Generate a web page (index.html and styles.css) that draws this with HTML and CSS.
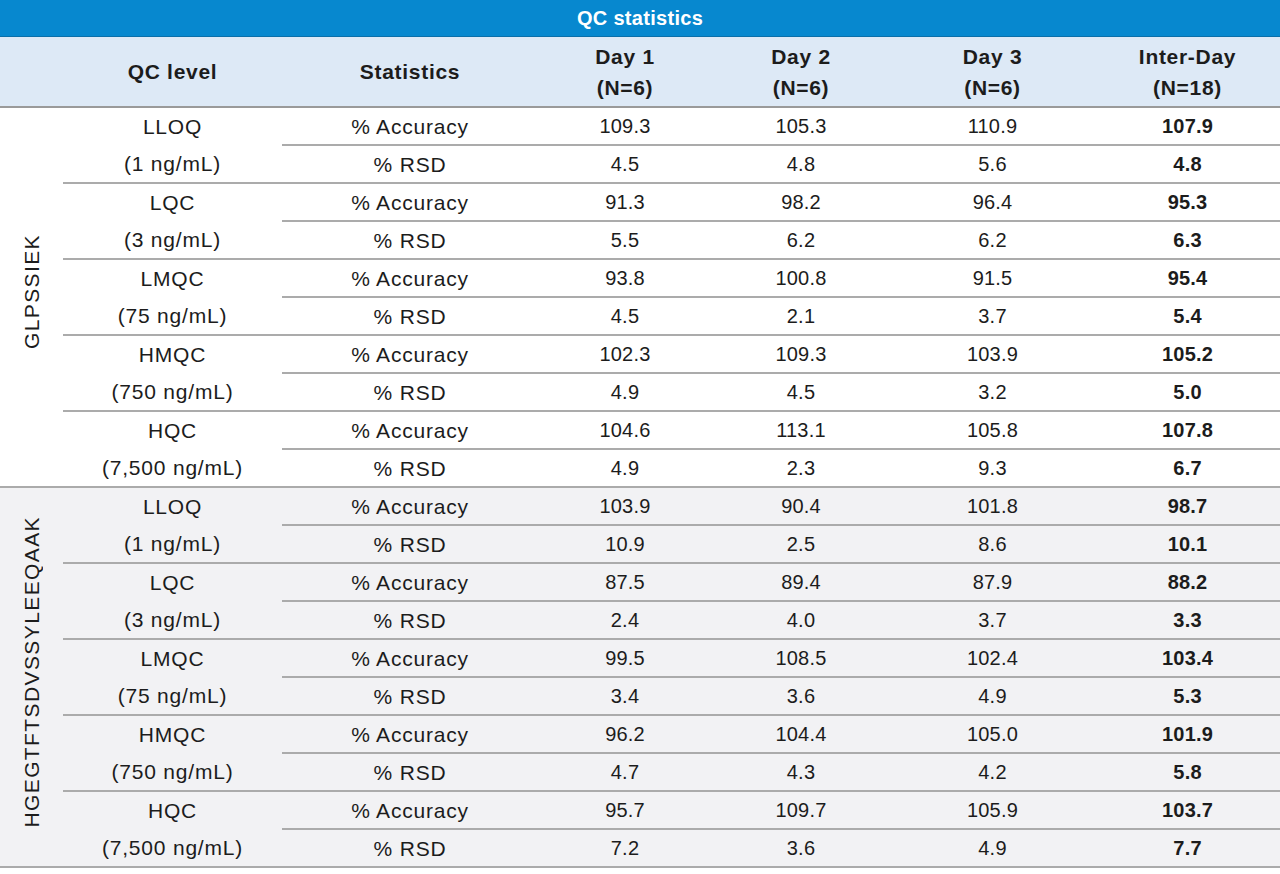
FILE: index.html
```html
<!DOCTYPE html>
<html lang="en">
<head>
<meta charset="utf-8">
<title>QC statistics</title>
<link rel="stylesheet" href="styles.css">
</head>
<body>
<table class="qc">
  <colgroup>
    <col class="c-pep"><col class="c-level"><col class="c-stat"><col class="c-d1"><col class="c-d2"><col class="c-d3"><col class="c-inter">
  </colgroup>
  <thead>
    <tr class="title-row"><th colspan="7">QC statistics</th></tr>
    <tr class="head-row">
      <th></th>
      <th>QC level</th>
      <th>Statistics</th>
      <th>Day 1<br>(N=6)</th>
      <th>Day 2<br>(N=6)</th>
      <th>Day 3<br>(N=6)</th>
      <th>Inter-Day<br>(N=18)</th>
    </tr>
  </thead>
  <tbody class="grp">
    <tr><td class="pep" rowspan="10"><span>GLPSSIEK</span></td><td class="lvl" rowspan="2">LLOQ<br>(1 ng/mL)</td><td class="s">% Accuracy</td><td>109.3</td><td>105.3</td><td>110.9</td><td class="b">107.9</td></tr>
    <tr><td class="s">% RSD</td><td>4.5</td><td>4.8</td><td>5.6</td><td class="b">4.8</td></tr>
    <tr><td class="lvl" rowspan="2">LQC<br>(3 ng/mL)</td><td class="s">% Accuracy</td><td>91.3</td><td>98.2</td><td>96.4</td><td class="b">95.3</td></tr>
    <tr><td class="s">% RSD</td><td>5.5</td><td>6.2</td><td>6.2</td><td class="b">6.3</td></tr>
    <tr><td class="lvl" rowspan="2">LMQC<br>(75 ng/mL)</td><td class="s">% Accuracy</td><td>93.8</td><td>100.8</td><td>91.5</td><td class="b">95.4</td></tr>
    <tr><td class="s">% RSD</td><td>4.5</td><td>2.1</td><td>3.7</td><td class="b">5.4</td></tr>
    <tr><td class="lvl" rowspan="2">HMQC<br>(750 ng/mL)</td><td class="s">% Accuracy</td><td>102.3</td><td>109.3</td><td>103.9</td><td class="b">105.2</td></tr>
    <tr><td class="s">% RSD</td><td>4.9</td><td>4.5</td><td>3.2</td><td class="b">5.0</td></tr>
    <tr><td class="lvl" rowspan="2">HQC<br>(7,500 ng/mL)</td><td class="s">% Accuracy</td><td>104.6</td><td>113.1</td><td>105.8</td><td class="b">107.8</td></tr>
    <tr><td class="s">% RSD</td><td>4.9</td><td>2.3</td><td>9.3</td><td class="b">6.7</td></tr>
  </tbody>
  <tbody class="grp alt">
    <tr><td class="pep" rowspan="10"><span>HGEGTFTSDVSSYLEEQAAK</span></td><td class="lvl" rowspan="2">LLOQ<br>(1 ng/mL)</td><td class="s">% Accuracy</td><td>103.9</td><td>90.4</td><td>101.8</td><td class="b">98.7</td></tr>
    <tr><td class="s">% RSD</td><td>10.9</td><td>2.5</td><td>8.6</td><td class="b">10.1</td></tr>
    <tr><td class="lvl" rowspan="2">LQC<br>(3 ng/mL)</td><td class="s">% Accuracy</td><td>87.5</td><td>89.4</td><td>87.9</td><td class="b">88.2</td></tr>
    <tr><td class="s">% RSD</td><td>2.4</td><td>4.0</td><td>3.7</td><td class="b">3.3</td></tr>
    <tr><td class="lvl" rowspan="2">LMQC<br>(75 ng/mL)</td><td class="s">% Accuracy</td><td>99.5</td><td>108.5</td><td>102.4</td><td class="b">103.4</td></tr>
    <tr><td class="s">% RSD</td><td>3.4</td><td>3.6</td><td>4.9</td><td class="b">5.3</td></tr>
    <tr><td class="lvl" rowspan="2">HMQC<br>(750 ng/mL)</td><td class="s">% Accuracy</td><td>96.2</td><td>104.4</td><td>105.0</td><td class="b">101.9</td></tr>
    <tr><td class="s">% RSD</td><td>4.7</td><td>4.3</td><td>4.2</td><td class="b">5.8</td></tr>
    <tr><td class="lvl" rowspan="2">HQC<br>(7,500 ng/mL)</td><td class="s">% Accuracy</td><td>95.7</td><td>109.7</td><td>105.9</td><td class="b">103.7</td></tr>
    <tr><td class="s">% RSD</td><td>7.2</td><td>3.6</td><td>4.9</td><td class="b">7.7</td></tr>
  </tbody>
</table>
</body>
</html>
```

FILE: styles.css
```css
html, body {
  margin: 0;
  padding: 0;
  background: #ffffff;
}

body {
  font-family: "Liberation Sans", Arial, sans-serif;
  color: #1c1c1c;
}

.qc {
  width: 1280px;
  border-collapse: collapse;
  table-layout: fixed;
  font-size: 20px;
  letter-spacing: 0.2px;
}

.c-pep { width: 63px; }
.c-level { width: 219px; }
.c-stat { width: 256px; }
.c-d1 { width: 174px; }
.c-d2 { width: 178px; }
.c-d3 { width: 205px; }
.c-inter { width: 185px; }

.title-row th {
  height: 36px;
  padding: 0;
  background: #0788cf;
  color: #ffffff;
  font-weight: bold;
  font-size: 20px;
  letter-spacing: 0.3px;
  text-align: center;
  border-bottom: 1px solid #0a6fa9;
}

.head-row th {
  height: 69px;
  padding: 0;
  background: #dde9f6;
  color: #1c1c1c;
  font-weight: bold;
  font-size: 21px;
  letter-spacing: 0.7px;
  line-height: 31px;
  text-align: center;
  border-bottom: 2px solid #9a9a9a;
}

.grp td {
  height: 35px;
  padding: 0;
  text-align: center;
  line-height: 35px;
  border-bottom: 2px solid #ababab;
}

.grp td.s,
.grp td.lvl {
  font-size: 21px;
  letter-spacing: 0.8px;
}

.grp td.lvl {
  line-height: 37px;
}

.grp.alt td {
  background: #f2f2f4;
}

.b {
  font-weight: bold;
}

.pep {
  vertical-align: middle;
}

.pep span {
  display: inline-block;
  writing-mode: vertical-rl;
  transform: rotate(180deg);
  font-size: 21px;
  letter-spacing: 1.4px;
  line-height: 24px;
}
```
